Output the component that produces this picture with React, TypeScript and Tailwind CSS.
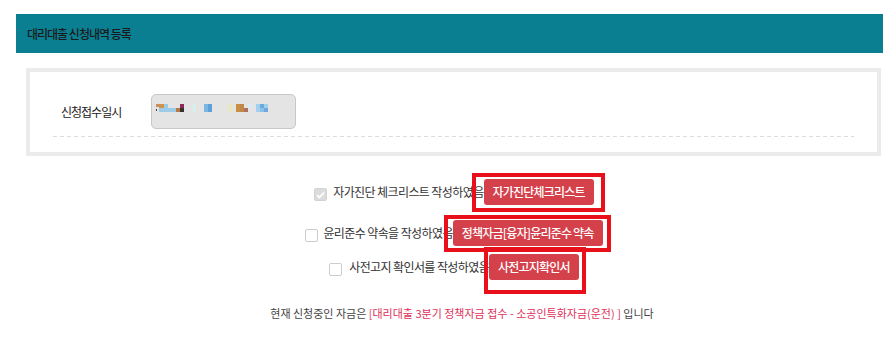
import React from "react";

const blocks: [number, number, number, number, string][] = [
  [156, 105, 3, 3, "#c89060"],
  [156, 110, 1, 2, "#5a3a20"],
  [159, 105, 5, 4, "#d09448"],
  [159, 109, 5, 4, "#9ccbe8"],
  [164, 105, 4, 8, "#9ccbe8"],
  [168, 109, 8, 4, "#9ccbe8"],
  [176, 109, 4, 4, "#b87840"],
  [180, 105, 4, 4, "#8a2a5a"],
  [180, 109, 4, 4, "#333333"],
  [192, 105, 4, 8, "#dcece6"],
  [204, 105, 4, 8, "#7ab8e0"],
  [208, 105, 4, 8, "#5fa0d8"],
  [228, 105, 4, 8, "#e8e8c0"],
  [236, 105, 4, 8, "#c89040"],
  [240, 105, 4, 8, "#c08848"],
  [244, 109, 4, 4, "#b07060"],
  [248, 105, 4, 4, "#d8ecf4"],
  [256, 105, 4, 8, "#a0d0ec"],
  [260, 105, 4, 4, "#6ca8dc"],
  [260, 109, 4, 4, "#8cc0e8"],
  [264, 109, 4, 4, "#6ca8dc"],
  [264, 105, 4, 4, "#a0d0ec"],
];

function Checkbox({ checked }: { checked?: boolean }) {
  if (checked) {
    return (
      <span className="mt-[5px] w-[13px] h-[13px] rounded-[2px] bg-[#dcdcdc] border border-[#d2d2d2] flex items-center justify-center shrink-0">
        <svg width="9" height="8" viewBox="0 0 9 8">
          <path d="M1 4.2 L3.4 6.5 L8 1.5" stroke="#ffffff" strokeWidth="1.8" fill="none" />
        </svg>
      </span>
    );
  }
  return (
    <span className="mt-[5px] w-[13px] h-[13px] rounded-[2px] bg-white border border-[#cccccc] shrink-0" />
  );
}

function Btn({ children }: { children: React.ReactNode }) {
  return (
    <span className="h-[26px] px-[9px] rounded-[3px] bg-[#d5414b] text-white text-[12px] tracking-[-0.8px] font-medium flex items-center whitespace-nowrap shrink-0">
      {children}
    </span>
  );
}

export default function App() {
  return (
    <div className="relative w-[894px] h-[353px] bg-white pt-[14px] pl-[16px] pr-[11px] font-['Noto_Sans_CJK_KR',sans-serif] text-[#333333] overflow-hidden">
      <div className="h-[39px] bg-[#0a7f91] flex items-center pl-[11px] text-[12px] tracking-[-1px] text-[#1a1a1a] font-medium">
        대리대출 신청내역 등록
      </div>

      <div className="mt-[15px] ml-[10px] mr-[2px] h-[88px] border-4 border-[#ebebeb] px-[23px] pt-[22px]">
        <div className="flex items-center h-[35px]">
          <div className="w-[98px] pl-[8px] text-[12px] tracking-[-1px] text-[#222222]">신청접수일시</div>
          <div className="w-[145px] h-[35px] bg-[#e4e4e4] border border-[#c8c8c8] rounded-[5px] pt-[9px] pl-[4px]">
            <svg width="120" height="10" viewBox="0 0 120 10">
              {blocks.map(([x, y, w, h, c], i) => (
                <rect key={i} x={x - 156} y={y - 105} width={w} height={h} fill={c} />
              ))}
            </svg>
          </div>
        </div>
        <div className="mt-[7px] h-px bg-[repeating-linear-gradient(to_right,#dddddd_0px,#dddddd_4px,transparent_4px,transparent_7px)]" />
      </div>

      <div className="pl-[9px] text-[12px] tracking-[-0.6px]">
        <div className="mt-[23px] h-[26px] flex items-center justify-center">
          <Checkbox checked />
          <span className="ml-[6px] whitespace-nowrap">자가진단 체크리스트 작성하였음</span>
          <Btn>자가진단체크리스트</Btn>
        </div>
        <div className="mt-[15px] h-[26px] flex items-center justify-center">
          <Checkbox />
          <span className="ml-[5px] whitespace-nowrap">윤리준수 약속을 작성하였음</span>
          <Btn>정책자금[융자]윤리준수 약속</Btn>
        </div>
        <div className="mt-[8px] h-[26px] flex items-center justify-center">
          <Checkbox />
          <span className="ml-[7px] whitespace-nowrap">사전고지 확인서를 작성하였음</span>
          <Btn>사전고지확인서</Btn>
        </div>
      </div>

      <div className="mt-[25px] pl-[25px] text-center text-[11px] leading-[16px] text-[#444444] whitespace-nowrap">
        현재 신청중인 자금은 <span className="text-[#e0305a]">[대리대출 3분기 정책자금 접수 - 소공인특화자금(운전) ]</span> 입니다
      </div>

      <div className="absolute left-[472px] top-[173px] w-[133px] h-[39px] border-4 border-[#e8101a]" />
      <div className="absolute left-[444px] top-[215px] w-[167px] h-[37px] border-4 border-[#e8101a]" />
      <div className="absolute left-[484px] top-[247px] w-[102px] h-[47px] border-4 border-[#e8101a]" />
    </div>
  );
}
